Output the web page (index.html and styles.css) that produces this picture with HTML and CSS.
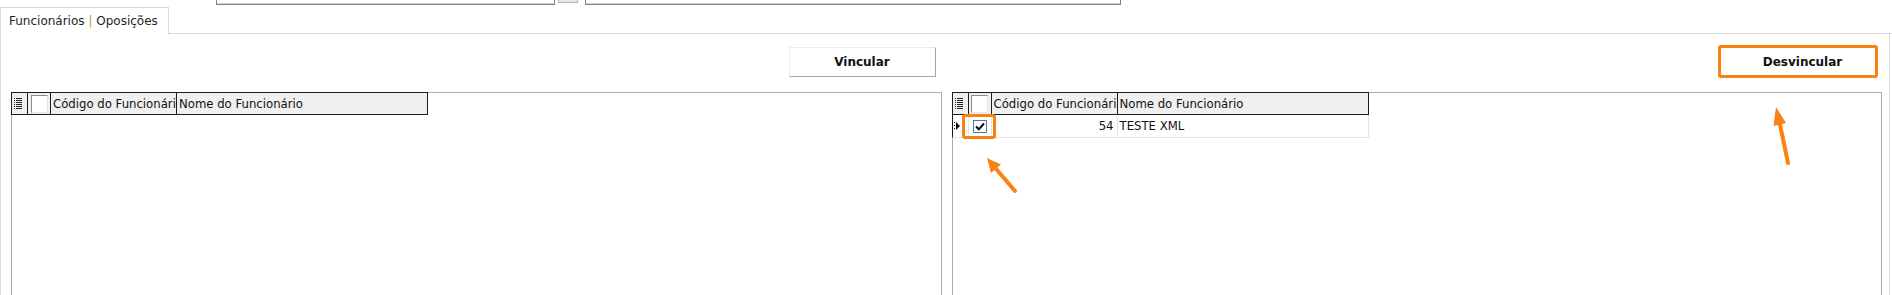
FILE: index.html
```html
<!DOCTYPE html>
<html lang="pt-BR">
<head>
    <meta charset="UTF-8">
    <title>Funcionários | Oposições</title>
    <link rel="stylesheet" href="styles.css">
</head>
<body>

    <!-- campos do topo (cortados) -->
    <div class="topbar">
        <div class="field field-wide"></div>
        <div class="field-btn"></div>
        <div class="field field-long"></div>
    </div>

    <!-- abas -->
    <div class="tabs">
        <div class="tab">Funcionários <span class="caret">|</span> Oposições</div>
        <div class="tab-line"></div>
    </div>

    <div class="panel">
        <!-- lado esquerdo: funcionários disponíveis -->
        <section class="side">
            <div class="actions">
                <button class="btn">Vincular</button>
            </div>
            <div class="grid">
                <div class="grid-head">
                    <div class="cell ind">
                        <svg width="8" height="12" viewBox="0 0 8 12"><g fill="#222"><rect x="0" y="0" width="1" height="1"/><rect x="2" y="0" width="6" height="1"/><rect x="0" y="2" width="1" height="1"/><rect x="2" y="2" width="6" height="1"/><rect x="0" y="4" width="1" height="1"/><rect x="2" y="4" width="6" height="1"/><rect x="0" y="6" width="1" height="1"/><rect x="2" y="6" width="6" height="1"/><rect x="0" y="8" width="1" height="1"/><rect x="2" y="8" width="6" height="1"/><rect x="0" y="10" width="1" height="1"/><rect x="2" y="10" width="6" height="1"/></g></svg>
                    </div>
                    <div class="cell chk"><span class="box"></span></div>
                    <div class="cell code">Código do Funcionário</div>
                    <div class="cell name">Nome do Funcionário</div>
                </div>
            </div>
        </section>

        <!-- lado direito: funcionários vinculados -->
        <section class="side right">
            <div class="actions">
                <button class="btn btn-marked">Desvincular</button>
            </div>
            <div class="grid">
                <div class="grid-head">
                    <div class="cell ind">
                        <svg width="8" height="12" viewBox="0 0 8 12"><g fill="#222"><rect x="0" y="0" width="1" height="1"/><rect x="2" y="0" width="6" height="1"/><rect x="0" y="2" width="1" height="1"/><rect x="2" y="2" width="6" height="1"/><rect x="0" y="4" width="1" height="1"/><rect x="2" y="4" width="6" height="1"/><rect x="0" y="6" width="1" height="1"/><rect x="2" y="6" width="6" height="1"/><rect x="0" y="8" width="1" height="1"/><rect x="2" y="8" width="6" height="1"/><rect x="0" y="10" width="1" height="1"/><rect x="2" y="10" width="6" height="1"/></g></svg>
                    </div>
                    <div class="cell chk"><span class="box"></span></div>
                    <div class="cell code">Código do Funcionário</div>
                    <div class="cell name">Nome do Funcionário</div>
                </div>
                <div class="grid-row">
                    <div class="cell ind">
                        <svg width="6" height="10" viewBox="0 0 6 10"><g fill="#111"><rect x="0" y="1" width="1" height="1"/><rect x="0" y="4" width="1" height="1"/><rect x="0" y="7" width="1" height="1"/><path d="M2 1 L6 5 L2 9 Z"/></g></svg>
                    </div>
                    <div class="cell chk">
                        <span class="box checked"><svg width="10" height="9" viewBox="0 0 10 9"><path d="M1 4.5 L3.8 7.3 L9 1.5" fill="none" stroke="#000" stroke-width="2"/></svg></span>
                    </div>
                    <div class="cell code num">54</div>
                    <div class="cell name">TESTE XML</div>
                </div>
            </div>
        </section>
    </div>

    <!-- marcações em laranja -->
    <svg class="marks" width="1892" height="295" viewBox="0 0 1892 295">
        <rect x="963.5" y="115.5" width="31" height="22" rx="2" fill="none" stroke="#fb8110" stroke-width="3"/>
        <line x1="1015" y1="191" x2="996" y2="168.7" stroke="#fb8110" stroke-width="4" stroke-linecap="round"/>
        <polygon points="987,158 1001,164.5 991,173" fill="#fb8110"/>
        <line x1="1788" y1="163" x2="1780" y2="124.6" stroke="#fb8110" stroke-width="4" stroke-linecap="round"/>
        <polygon points="1776,107 1786,123 1773.5,126" fill="#fb8110"/>
    </svg>

</body>
</html>
```

FILE: styles.css
```css
body {
    margin: 0;
    width: 1892px;
    height: 295px;
    overflow: hidden;
    position: relative;
    background-color: #fff;
    font-family: "DejaVu Sans", sans-serif;
    font-size: 11.7px;
    color: #111;
}

.topbar {
    height: 7px;
    display: flex;
    align-items: flex-start;
    padding-left: 216px;
}

.field {
    height: 21px;
    margin-top: -16px;
    border: 1px solid #828282;
    box-shadow: inset 0 -1px 0 #d4d4d4;
    background-color: #fff;
    box-sizing: border-box;
}

.field-wide {
    width: 339px;
}

.field-btn {
    width: 20px;
    height: 19px;
    margin: -16px 0 0 3px;
    background-color: #e6e6e6;
    border: 1px solid #b4b4b4;
    box-sizing: border-box;
}

.field-long {
    width: 536px;
    margin-left: 7px;
}

.tabs {
    display: flex;
    height: 27px;
}

.tab {
    width: 169px;
    height: 27px;
    box-sizing: border-box;
    padding-left: 8px;
    border: 1px solid #d9d9d9;
    border-bottom: none;
    display: flex;
    align-items: center;
    white-space: pre;
    font-size: 12px;
    color: #1e1e1e;
}

.caret {
    color: #d08a2a;
}

.tab-line {
    flex: 1;
    border-bottom: 1px solid #d9d9d9;
}

.panel {
    width: 1890px;
    height: 290px;
    box-sizing: border-box;
    border: 1px solid #d9d9d9;
    border-top: none;
    padding: 0 7px 0 10px;
    display: grid;
    grid-template-columns: 1fr 1fr;
    gap: 10px;
}

.side {
    display: flex;
    flex-direction: column;
    min-width: 0;
}

.actions {
    height: 58px;
    box-sizing: border-box;
    display: flex;
    justify-content: flex-end;
    align-items: flex-start;
    padding: 13px 6px 0 0;
}

.right .actions {
    padding-right: 4px;
}

.btn {
    width: 147px;
    height: 30px;
    font-family: "DejaVu Sans", sans-serif;
    font-size: 12px;
    font-weight: bold;
    color: #111;
    background-color: #fff;
    border: 1px solid;
    border-color: #ececec #a6a6a6 #a6a6a6 #ececec;
    padding: 0;
}

.btn-marked {
    width: 160px;
    height: 33px;
    margin-top: -2px;
    padding-left: 9px;
    border: 3px solid #fb8110;
    border-radius: 3px;
}

.grid {
    flex: 1;
    border: 1px solid #acacac;
    background-color: #fff;
}

.grid-head {
    display: flex;
    width: max-content;
    height: 23px;
    box-sizing: border-box;
    margin: -1px 0 0 -1px;
    border: 1px solid #1c1c1c;
    background-color: #f0f0f0;
}

.grid-row {
    display: flex;
    width: max-content;
    height: 23px;
    margin-left: -1px;
}

.cell {
    box-sizing: border-box;
    display: flex;
    align-items: center;
    overflow: hidden;
    white-space: nowrap;
    border-right: 1px solid #1c1c1c;
    padding-left: 2px;
}

.ind {
    width: 16px;
    padding-left: 2px;
}

.chk {
    width: 23px;
    justify-content: center;
    padding-left: 0;
}

.code {
    width: 126px;
}

.name {
    width: 250px;
    border-right: none;
}

.grid-row .cell {
    border-right: 1px solid #e4e4e4;
    border-bottom: 1px solid #e4e4e4;
    color: #101020;
}

.grid-row .ind {
    width: 17px;
    border-left: 1px solid #1c1c1c;
    padding-left: 1px;
}

.grid-row .name {
    width: 251px;
}

.num {
    justify-content: flex-end;
    padding-right: 3px;
}

.box {
    width: 17px;
    height: 18px;
    box-sizing: border-box;
    background-color: #fff;
    border: 1px solid;
    border-color: #8c8c8c #e6e6e6 #e6e6e6 #8c8c8c;
}

.box.checked {
    width: 14px;
    height: 13px;
    border: 1px solid #3d7ab5;
    display: flex;
    align-items: center;
    justify-content: center;
}

.marks {
    position: absolute;
    top: 0;
    left: 0;
    pointer-events: none;
}
```
